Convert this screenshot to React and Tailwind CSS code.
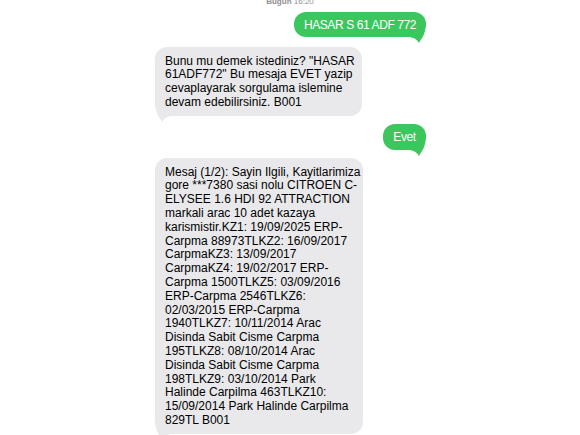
const font = { fontFamily: '"Liberation Sans", Arial, sans-serif' };

const firstReply = [
  'Bunu mu demek istediniz? "HASAR',
  '61ADF772" Bu mesaja EVET yazip',
  "cevaplayarak sorgulama islemine",
  "devam edebilirsiniz. B001",
];

const report = [
  "Mesaj (1/2): Sayin Ilgili, Kayitlarimiza",
  "gore ***7380 sasi nolu CITROEN C-",
  "ELYSEE 1.6 HDI 92 ATTRACTION",
  "markali arac 10 adet kazaya",
  "karismistir.KZ1: 19/09/2025 ERP-",
  "Carpma 88973TLKZ2: 16/09/2017",
  "CarpmaKZ3: 13/09/2017",
  "CarpmaKZ4: 19/02/2017 ERP-",
  "Carpma 1500TLKZ5: 03/09/2016",
  "ERP-Carpma 2546TLKZ6:",
  "02/03/2015 ERP-Carpma",
  "1940TLKZ7: 10/11/2014 Arac",
  "Disinda Sabit Cisme Carpma",
  "195TLKZ8: 08/10/2014 Arac",
  "Disinda Sabit Cisme Carpma",
  "198TLKZ9: 03/10/2014 Park",
  "Halinde Carpilma 463TLKZ10:",
  "15/09/2014 Park Halinde Carpilma",
  "829TL B001",
];

// little curled tail under the bubble corner, drawn beneath the text
function Tail({ fill, side }) {
  const pos = side === "right" ? "right-0" : "left-0 -scale-x-100";
  return (
    <svg
      className={`absolute bottom-[-6px] ${pos}`}
      width="18"
      height="18"
      viewBox="0 0 18 18"
    >
      <path
        d="M1 12 C6 12.5 9.5 15 11 18 C12.5 15 16 11 17.3 5 L10 0 L1 4 Z"
        fill={fill}
      />
    </svg>
  );
}

function Sent({ text, width, className = "" }) {
  return (
    <div
      className={`relative self-end flex items-center justify-center rounded-[12px] bg-[#3cc75e] text-white text-[12px] tracking-[-0.4px] whitespace-nowrap ${width} ${className}`}
    >
      <Tail fill="#3cc75e" side="right" />
      <span className="relative">{text}</span>
    </div>
  );
}

function Received({ lines, width, className = "" }) {
  return (
    <div
      className={`relative self-start ml-px rounded-[12px] bg-[#e9e9eb] pl-[10px] pt-[7.5px] pb-[6px] text-[12px] leading-[13.8px] text-black ${width} ${className}`}
    >
      <Tail fill="#e9e9eb" side="left" />
      {lines.map((l, i) => (
        <div key={i} className="relative whitespace-pre">
          {l}
        </div>
      ))}
    </div>
  );
}

export default function App() {
  return (
    <div className="h-[435px] w-full overflow-hidden bg-white" style={font}>
      <div className="mx-auto flex w-[272px] flex-col">
        <div className="-mt-[3px] text-center text-[8px] leading-[10px] text-[#8e8e93]">
          <span className="font-semibold">Bugun</span> 16:20
        </div>
        <Sent text="HASAR S 61 ADF 772" width="w-[132px] h-[25px]" className="mt-[5px]" />
        <Received lines={firstReply} width="w-[207px]" className="mt-[10px]" />
        <Sent text="Evet" width="w-[43px] h-[26.5px]" className="mt-[8px]" />
        <Received lines={report} width="w-[208px]" className="mt-[8px]" />
      </div>
    </div>
  );
}
